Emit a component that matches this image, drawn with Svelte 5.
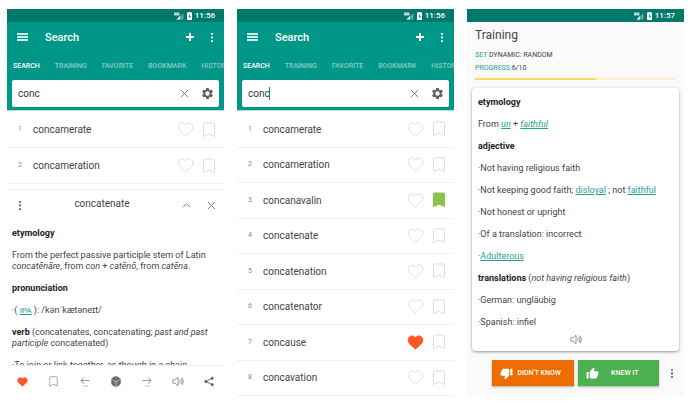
<script lang="ts">
  type Entry = { word: string; liked?: boolean; saved?: boolean };

  const tabs = ["Search", "Training", "Favorite", "Bookmark", "History"];

  const entries: Entry[] = [
    { word: "concamerate" },
    { word: "concameration" },
    { word: "concanavalin", saved: true },
    { word: "concatenate" },
    { word: "concatenation" },
    { word: "concatenator" },
    { word: "concause", liked: true },
    { word: "concavation" },
  ];

  let query = $state("conc");
  let done = $state(6);
  const total = 10;
</script>

{#snippet statusBar(time: string)}
  <div class="status">
    <svg class="signal" viewBox="0 0 20 16" aria-hidden="true">
      <path d="M0 1h11v6H0z" fill="#fff" opacity="0.7" />
      <path d="M19 2v13H5z" fill="#fff" opacity="0.35" />
      <path d="M12 8v7H5z" fill="#fff" />
    </svg>
    <svg class="battery" viewBox="0 0 10 16" aria-hidden="true">
      <path d="M3 0h4v1h3v15H0V1h3z" fill="#fff" />
      <path d="M6 4 3 9h2v4l3-5H6z" fill="#00796b" />
    </svg>
    <span>{time}</span>
  </div>
{/snippet}

{#snippet dots()}
  <svg class="dots" viewBox="0 0 4 12" aria-hidden="true">
    <path d="M1 1h2v2H1zM1 5h2v2H1zM1 9h2v2H1z" fill="currentColor" />
  </svg>
{/snippet}

{#snippet cross()}
  <svg class="cross" viewBox="0 0 10 10" aria-hidden="true">
    <path d="M1 1l8 8M9 1l-8 8" />
  </svg>
{/snippet}

{#snippet heart()}
  <svg class="heart" viewBox="0 0 18 16" aria-hidden="true">
    <path
      d="M9 15C4.5 11 1.2 8.6 1.2 5.2 1.2 2.8 3 1 5.2 1 6.800 1 8.200 1.800 9 3.200 9.800 1.800 11.200 1 12.800 1 15 1 16.800 2.800 16.800 5.200 16.800 8.600 13.500 11 9 15z"
    />
  </svg>
{/snippet}

{#snippet bookmark()}
  <svg class="bookmark" viewBox="0 0 12 16" aria-hidden="true">
    <path d="M.5 2q0-1 1-1h9q1 0 1 1v12.500L6 12.200.5 14.500z" />
  </svg>
{/snippet}

{#snippet speaker()}
  <svg class="speaker" viewBox="0 0 14 12" aria-hidden="true">
    <path d="M1 4h2.500L7 1v10L3.500 8H1zM8.800 4q1.500 2 0 4M10.500 2.800q2.500 3.200 0 6.400M12 1.600q2.400 4.400 0 8.800" />
  </svg>
{/snippet}

{#snippet header(focused: boolean, id: string)}
  <header>
    {@render statusBar("11:56")}
    <div class="appbar">
      <button class="plain" aria-label="Menu">
        <svg class="burger" viewBox="0 0 11 10" aria-hidden="true">
          <path d="M0 1h11v2H0zM0 4h11v2H0zM0 7h11v2H0z" fill="#fff" opacity="0.8" />
        </svg>
      </button>
      <h1>Search</h1>
      <button class="plain" aria-label="Add">
        <svg class="plus" viewBox="0 0 8 8" aria-hidden="true">
          <path d="M3 0h2v3h3v2H5v3H3V5H0V3h3z" fill="#fff" />
        </svg>
      </button>
      <button class="plain" aria-label="More">{@render dots()}</button>
    </div>
    <nav>
      {#each tabs as tab, i}
        <button class="tab" class:active={i === 0}>{tab}</button>
      {/each}
    </nav>
    <div class="searchbox">
      <input {id} type="text" aria-label="Search word" bind:value={query} />
      {#if focused}<span class="caret"></span>{/if}
      <button class="plain" aria-label="Clear">{@render cross()}</button>
      <button class="plain" aria-label="Settings">
        <svg class="gear" viewBox="2 2 20 20" aria-hidden="true">
          <path
            fill-rule="evenodd"
            d="M19.430 12.980c.04-.32.07-.64.07-.98s-.03-.66-.07-.98l2.110-1.650c.19-.15.24-.42.12-.64l-2-3.460c-.12-.22-.39-.3-.61-.22l-2.490 1c-.52-.4-1.080-.73-1.690-.98l-.38-2.650C14.460 2.180 14.250 2 14 2h-4c-.25 0-.46.18-.49.42l-.38 2.650c-.61.25-1.170.59-1.690.98l-2.490-1c-.23-.09-.49 0-.61.22l-2 3.460c-.13.22-.07.49.12.64l2.110 1.650c-.04.32-.07.65-.07.98s.03.66.07.98l-2.110 1.650c-.19.15-.24.42-.12.64l2 3.460c.12.22.39.3.61.22l2.490-1c.52.4 1.080.73 1.690.98l.38 2.650c.03.24.24.42.49.42h4c.25 0 .46-.18.49-.42l.38-2.650c.61-.25 1.170-.59 1.690-.98l2.490 1c.23.09.49 0 .61-.22l2-3.460c.12-.22.07-.49-.12-.64zM12 16a4 4 0 1 1 0-8 4 4 0 0 1 0 8z"
          />
        </svg>
      </button>
    </div>
  </header>
{/snippet}

{#snippet row(entry: Entry, n: number)}
  <li>
    <span class="num">{n}</span>
    <span class="word">{entry.word}</span>
    <button class="plain" class:liked={entry.liked} aria-label="Favorite">{@render heart()}</button>
    <button class="plain" class:saved={entry.saved} aria-label="Bookmark">{@render bookmark()}</button>
  </li>
{/snippet}

<main>
  <section class="phone">
    {@render header(false, "query-detail")}
    <ol>
      {#each entries.slice(0, 2) as entry, i}
        {@render row(entry, i + 1)}
      {/each}
    </ol>
    <article class="sheet">
      <div class="sheet-head">
        <button class="plain" aria-label="More">{@render dots()}</button>
        <h2>concatenate</h2>
        <button class="plain" aria-label="Expand">
          <svg class="cross" viewBox="0 0 10 10" aria-hidden="true"><path d="M1 7l4-4 4 4" /></svg>
        </button>
        <button class="plain" aria-label="Close">{@render cross()}</button>
      </div>
      <div class="prose">
        <p><b>etymology</b></p>
        <p>
          From the perfect passive participle stem of Latin <i>concatēnāre</i>, from <i>con</i> +
          <i>catēnō</i>, from <i>catēna</i>.
        </p>
        <p><b>pronunciation</b></p>
        <p>·( <a class="small" href="#ipa">IPA</a> ): /kənˈkætəneɪt/</p>
        <p>
          <b>verb</b> (concatenates, concatenating; <i>past and past participle</i> concatenated)
        </p>
        <p>·To join or link together, as though in a chain</p>
      </div>
    </article>
    <footer class="tools">
      <button class="plain liked" aria-label="Favorite">{@render heart()}</button>
      <button class="plain" aria-label="Bookmark">{@render bookmark()}</button>
      <button class="plain" aria-label="Previous">
        <svg class="tool" viewBox="0 0 12 12" aria-hidden="true">
          <path d="M11 5H1.500M5 1.500L1.500 5 5 8.500M4 11h1M6 11h1M8 11h1" />
        </svg>
      </button>
      <button class="plain" aria-label="Random">
        <svg class="tool" viewBox="0 0 12 12" aria-hidden="true">
          <path class="solid" d="M6 .8Q11 1 11 6T6 11.200 1 6 6 .8z" />
          <path class="pips" d="M2.500 4.500L6 6.200l3.500-1.700M6 6.200v4M6 2.800v.1M3.800 7.500v.1M8.200 7.500v.1" />
        </svg>
      </button>
      <button class="plain" aria-label="Next">
        <svg class="tool" viewBox="0 0 12 12" aria-hidden="true">
          <path d="M1 5h9.500M7 1.500L10.500 5 7 8.500M4 11h1M6 11h1M8 11h1" />
        </svg>
      </button>
      <button class="plain" aria-label="Listen">{@render speaker()}</button>
      <button class="plain" aria-label="Share">
        <svg class="tool share" viewBox="0 0 12 12" aria-hidden="true">
          <path d="M9.500 2.500L2.500 6l7 3.500" />
          <circle cx="9.500" cy="2.500" r="1.200" />
          <circle cx="2.500" cy="6" r="1.200" />
          <circle cx="9.500" cy="9.500" r="1.200" />
        </svg>
      </button>
    </footer>
  </section>

  <section class="phone">
    {@render header(true, "query-list")}
    <ol class="fill">
      {#each entries as entry, i}
        {@render row(entry, i + 1)}
      {/each}
    </ol>
  </section>

  <section class="phone training">
    {@render statusBar("11:57")}
    <div class="intro">
      <h2>Training</h2>
      <p><span>SET</span> DYNAMIC: RANDOM</p>
      <p><label for="done">PROGRESS</label> {done}/{total}</p>
      <progress id="done" value={done} max={total}></progress>
    </div>
    <article class="card">
      <div class="prose">
        <p><b>etymology</b></p>
        <p>From <a href="#un"><i>un</i></a> + <a href="#faithful"><i>faithful</i></a></p>
        <p><b>adjective</b></p>
        <p>·Not having religious faith</p>
        <p>·Not keeping good faith; <a href="#disloyal">disloyal</a> ; not <a href="#faithful">faithful</a></p>
        <p>·Not honest or upright</p>
        <p>·Of a translation: incorrect</p>
        <p>·<a href="#adulterous">Adulterous</a></p>
        <p><b>translations</b> (<i>not having religious faith</i>)</p>
        <p>·German: ungläubig</p>
        <p>·Spanish: infiel</p>
      </div>
      <button class="plain" aria-label="Listen">{@render speaker()}</button>
    </article>
    <footer class="answers">
      <button class="answer no">
        <svg viewBox="0 0 24 24" aria-hidden="true">
          <path
            d="M15 3H6c-.83 0-1.540.5-1.840 1.220l-3.020 7.050c-.09.23-.14.47-.14.73v2c0 1.100.9 2 2 2h6.310l-.95 4.570-.03.32c0 .41.17.79.44 1.060L9.830 23l6.590-6.590c.36-.36.58-.86.58-1.410V5c0-1.100-.9-2-2-2zm4 0v12h4V3h-4z"
          />
        </svg>
        <span>DIDN'T KNOW</span>
      </button>
      <button class="answer yes">
        <svg viewBox="0 0 24 24" aria-hidden="true">
          <path
            d="M1 21h4V9H1v12zm22-11c0-1.100-.9-2-2-2h-6.310l.95-4.570.03-.32c0-.41-.17-.79-.44-1.060L14.170 1 7.590 7.590C7.220 7.950 7 8.450 7 9v10c0 1.100.9 2 2 2h9c.83 0 1.540-.5 1.840-1.220l3.020-7.050c.09-.23.14-.47.14-.73v-2z"
          />
        </svg>
        <span>KNEW IT</span>
      </button>
      <button class="plain" aria-label="More">{@render dots()}</button>
    </footer>
  </section>
</main>

<style>
  :global(body) {
    background: #fff;
  }

  main {
    display: grid;
    grid-template-columns: repeat(3, 1fr);
    gap: 13px;
    box-sizing: border-box;
    height: 100vh;
    min-height: 400px;
    padding: 9px 8px 10px 7px;
    font-family: Roboto, "Liberation Sans", sans-serif;
    font-size: 9px;
    line-height: 11px;
    color: #444;
  }

  h1,
  h2,
  p,
  ol {
    margin: 0;
    padding: 0;
  }

  button {
    font-family: inherit;
    border: 0;
    padding: 0;
    cursor: pointer;
  }

  svg {
    display: block;
  }

  .plain {
    display: flex;
    align-items: center;
    justify-content: center;
    background: none;
    color: #616161;
  }

  .phone {
    display: flex;
    flex-direction: column;
    min-width: 0;
    min-height: 0;
    overflow: hidden;
  }

  header {
    background: #009688;
    color: #fff;
    padding-bottom: 3px;
    border-bottom: 1px solid #b2dfdb;
  }

  .status {
    display: flex;
    align-items: center;
    justify-content: flex-end;
    gap: 3px;
    height: 13px;
    padding-right: 9px;
    background: #00796b;
    color: #fff;
    font-size: 8px;
    font-weight: 500;
  }

  .signal {
    width: 10px;
    height: 8px;
  }

  .battery {
    width: 5px;
    height: 8px;
  }

  .appbar {
    display: flex;
    align-items: center;
    height: 30px;
    padding: 0 10px;
  }

  .appbar h1 {
    flex: 1;
    margin-left: 17px;
    font-size: 11px;
    font-weight: 500;
  }

  .appbar .plain {
    color: #fff;
  }

  .appbar .plain:last-child {
    margin-left: 16px;
  }

  .burger {
    width: 11px;
    height: 10px;
  }

  .plus {
    width: 8px;
    height: 8px;
  }

  .dots {
    width: 4px;
    height: 11px;
  }

  nav {
    display: flex;
    gap: 15px;
    height: 28px;
    padding-left: 6px;
    overflow: hidden;
  }

  .tab {
    background: none;
    color: #fff;
    opacity: 0.5;
    font-size: 7px;
    font-weight: 500;
    text-transform: uppercase;
  }

  .tab.active {
    opacity: 1;
  }

  .searchbox {
    position: relative;
    display: flex;
    align-items: center;
    gap: 13px;
    height: 27px;
    margin: 0 5px;
    padding: 0 6px;
    background: #fff;
    border-radius: 2px;
  }

  .searchbox input {
    flex: 1;
    min-width: 0;
    padding: 0;
    border: 0;
    outline: 0;
    background: none;
    font-family: inherit;
    font-size: 10px;
    color: #333;
  }

  .caret {
    position: absolute;
    left: 27px;
    top: 7px;
    width: 1px;
    height: 13px;
    background: #009688;
  }

  .cross {
    width: 9px;
    height: 9px;
    fill: none;
    stroke: #757575;
  }

  .gear {
    width: 11px;
    height: 11px;
    fill: #616161;
  }

  ol {
    padding: 1px 0;
    list-style: none;
  }

  .fill {
    display: flex;
    flex: 1;
    flex-direction: column;
  }

  .fill li {
    flex: 1;
    height: auto;
  }

  li {
    display: flex;
    align-items: center;
    box-sizing: border-box;
    height: 36px;
    padding: 0 9px 0 11px;
    border-bottom: 1px solid #f0f0f0;
  }

  .num {
    width: 15px;
    font-size: 7px;
    color: #888;
  }

  .word {
    flex: 1;
    font-size: 10px;
  }

  .heart {
    width: 17px;
    height: 15px;
    fill: none;
    stroke: #ddd;
  }

  .bookmark {
    width: 12px;
    height: 16px;
    fill: none;
    stroke: #ddd;
  }

  li .plain:last-child {
    margin-left: 9px;
  }

  .liked .heart {
    fill: #ff5722;
    stroke: #ff5722;
  }

  .saved .bookmark {
    fill: #8bc34a;
    stroke: #8bc34a;
  }

  .sheet {
    flex: 1;
    min-height: 0;
    margin-top: 4px;
    overflow: hidden;
    border-top: 1px solid #f0f0f0;
  }

  .sheet-head {
    display: flex;
    align-items: center;
    gap: 16px;
    height: 31px;
    padding: 0 8px 0 11px;
  }

  .sheet-head h2 {
    flex: 1;
    padding-bottom: 4px;
    font-size: 10px;
    font-weight: 400;
    text-align: center;
  }

  .prose {
    display: flex;
    flex-direction: column;
    gap: 11px;
  }

  .sheet .prose {
    padding: 7px 5px 0;
  }

  b {
    font-weight: 700;
    color: #222;
  }

  a {
    color: #26a08f;
  }

  .small {
    font-size: 8px;
  }

  .tools {
    display: flex;
    height: 31px;
    border-top: 1px solid #f0f0f0;
  }

  .tools .plain {
    flex: 1;
  }

  .tools .heart {
    width: 11px;
    height: 10px;
  }

  .tools .bookmark {
    width: 9px;
    height: 11px;
    stroke: #888;
  }

  .tool,
  .speaker {
    width: 12px;
    height: 11px;
    fill: none;
    stroke: #888;
  }

  .solid {
    fill: #616161;
  }

  .pips {
    stroke: #ccc;
    stroke-linecap: round;
  }

  .share {
    fill: #616161;
    stroke: #616161;
  }

  .share path {
    fill: none;
  }

  .training {
    background: #fafafa;
  }

  .intro {
    padding: 5px 8px 0;
    font-size: 7px;
    line-height: 13px;
  }

  .intro h2 {
    margin-bottom: 6px;
    font-size: 12px;
    font-weight: 400;
    line-height: 16px;
  }

  .intro span,
  .intro label {
    color: #26a08f;
  }

  progress {
    display: block;
    width: 100%;
    height: 2px;
    margin-top: 3px;
    border: 0;
    appearance: none;
  }

  progress::-webkit-progress-bar {
    background: #fdf3c4;
  }

  progress::-webkit-progress-value {
    background: #fddc5c;
  }

  .card {
    display: flex;
    flex: 1;
    flex-direction: column;
    align-items: center;
    margin: 8px 5px 0;
    padding: 9px 6px 0;
    background: #fff;
    border-radius: 4px;
    box-shadow: 0 1px 3px rgba(0, 0, 0, 0.4);
  }

  .card .prose {
    align-self: stretch;
  }

  .card .plain {
    margin-top: 6px;
  }

  .answers {
    display: flex;
    align-items: center;
    gap: 4px;
    padding: 9px 10px 11px 25px;
  }

  .answers .plain {
    margin-left: 7px;
  }

  .answer {
    display: flex;
    flex: 1;
    align-items: center;
    height: 26px;
    padding: 0 8px;
    color: #fff;
    font-size: 7px;
    font-weight: 500;
    box-shadow: 0 1px 2px rgba(0, 0, 0, 0.3);
  }

  .answer svg {
    width: 13px;
    height: 13px;
    fill: #fff;
  }

  .answer span {
    flex: 1;
    white-space: nowrap;
  }

  .no {
    background: #ef6c00;
  }

  .yes {
    background: #4caf50;
  }
</style>
